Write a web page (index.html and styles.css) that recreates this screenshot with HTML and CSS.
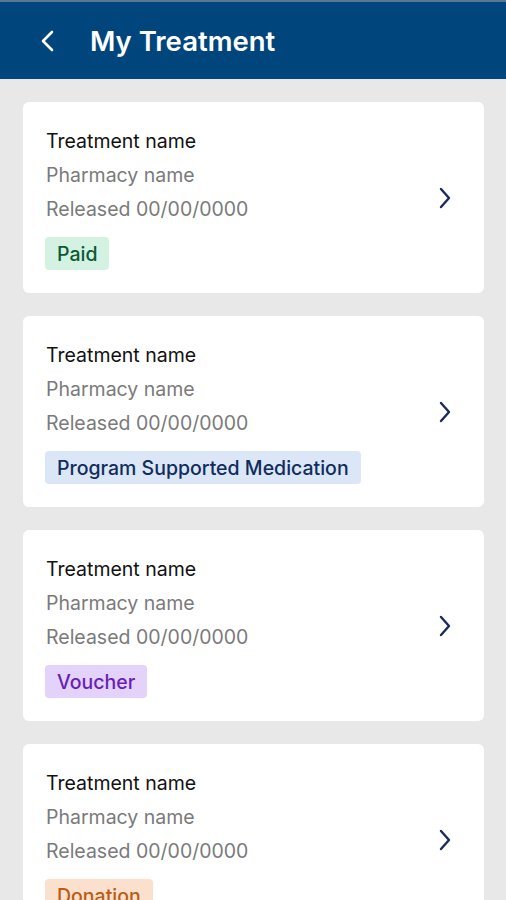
FILE: index.html
```html
<!DOCTYPE html>
<html lang="en">
<head>
  <meta charset="UTF-8" />
  <meta name="viewport" content="width=device-width, initial-scale=1.0"/>
  <title>My Treatment</title>
  <link rel="stylesheet" href="styles.css">
</head>
<body>
  <header class="top-bar">
    <button class="back-btn" aria-label="Back">
      <svg width="16" height="22" viewBox="0 0 16 22"><path d="M12 2 L3 11 L12 20" fill="none" stroke="#fff" stroke-width="2.6" stroke-linecap="round" stroke-linejoin="round"/></svg>
    </button>
    <h1 class="title">My Treatment</h1>
  </header>

  <main class="list">
    <!-- treatment card -->
    <div class="card">
      <div class="card-info">
        <p class="treatment">Treatment name</p>
        <p class="sub">Pharmacy name</p>
        <p class="sub">Released 00/00/0000</p>
        <span class="badge badge-paid">Paid</span>
      </div>
      <svg class="chevron" width="14" height="22" viewBox="0 0 14 22"><path d="M3 2 L11 11 L3 20" fill="none" stroke="#1b2b5b" stroke-width="2.4" stroke-linecap="round" stroke-linejoin="round"/></svg>
    </div>

    <div class="card">
      <div class="card-info">
        <p class="treatment">Treatment name</p>
        <p class="sub">Pharmacy name</p>
        <p class="sub">Released 00/00/0000</p>
        <span class="badge badge-program">Program Supported Medication</span>
      </div>
      <svg class="chevron" width="14" height="22" viewBox="0 0 14 22"><path d="M3 2 L11 11 L3 20" fill="none" stroke="#1b2b5b" stroke-width="2.4" stroke-linecap="round" stroke-linejoin="round"/></svg>
    </div>

    <div class="card">
      <div class="card-info">
        <p class="treatment">Treatment name</p>
        <p class="sub">Pharmacy name</p>
        <p class="sub">Released 00/00/0000</p>
        <span class="badge badge-voucher">Voucher</span>
      </div>
      <svg class="chevron" width="14" height="22" viewBox="0 0 14 22"><path d="M3 2 L11 11 L3 20" fill="none" stroke="#1b2b5b" stroke-width="2.4" stroke-linecap="round" stroke-linejoin="round"/></svg>
    </div>

    <div class="card">
      <div class="card-info">
        <p class="treatment">Treatment name</p>
        <p class="sub">Pharmacy name</p>
        <p class="sub">Released 00/00/0000</p>
        <span class="badge badge-donation">Donation</span>
      </div>
      <svg class="chevron" width="14" height="22" viewBox="0 0 14 22"><path d="M3 2 L11 11 L3 20" fill="none" stroke="#1b2b5b" stroke-width="2.4" stroke-linecap="round" stroke-linejoin="round"/></svg>
    </div>
  </main>
</body>
</html>
```

FILE: styles.css
```css
/* page */
body {
  font-family: 'Inter', 'Noto Sans', sans-serif;
  background-color: #e8e8e8;
  margin: 0;
  padding: 0;
  height: 100vh;
  overflow: hidden;
}

/* header bar */
.top-bar {
  display: flex;
  align-items: center;
  height: 77px;
  background-color: #00457c;
  border-top: 2px solid #5a7796;
  padding: 0 0 0 40px;
  gap: 34px;
}

.back-btn {
  background: none;
  border: none;
  padding: 0;
  display: flex;
  margin-top: 1px;
}

.title {
  margin: 0;
  color: #fff;
  font-size: 27.5px;
  font-weight: 600;
}

/* card list */
.list {
  display: flex;
  flex-direction: column;
  gap: 23px;
  padding: 23px 22px 23px 23px;
}

.card {
  display: flex;
  align-items: center;
  justify-content: space-between;
  background-color: #fff;
  border-radius: 6px;
  padding: 22px 32px 23px 23px;
}

.card-info {
  display: flex;
  flex-direction: column;
  align-items: flex-start;
}

.card-info p {
  margin: 0;
  line-height: 34px;
  font-size: 19.5px;
}

.treatment {
  color: #111;
}

.sub {
  color: #7a7a7a;
}

.chevron {
  margin-top: 1px;
}

/* status badges */
.badge {
  margin-top: 11px;
  font-size: 19.5px;
  font-weight: 500;
  line-height: 32px;
  padding: 1px 12px 0;
  margin-left: -1px;
  border-radius: 4px;
}

.badge-paid {
  background-color: #d3f2e2;
  color: #0c5a34;
}

.badge-program {
  background-color: #dbe7f6;
  color: #112c5c;
}

.badge-voucher {
  background-color: #e3d2fa;
  color: #6a1eb6;
}

.badge-donation {
  background-color: #fbe0cd;
  color: #b95d14;
}
```
